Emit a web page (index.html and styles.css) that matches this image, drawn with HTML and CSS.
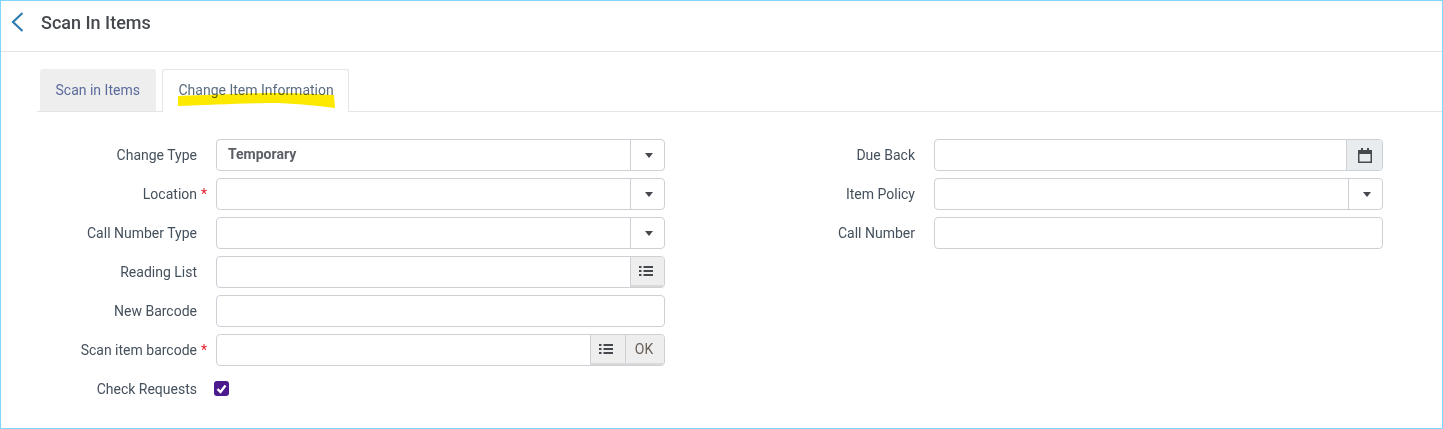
FILE: index.html
```html
<!DOCTYPE html>
<html lang="en">
<head>
<meta charset="utf-8">
<title>Scan In Items</title>
<link rel="stylesheet" href="styles.css">
</head>
<body>
<div class="frame">
  <header class="page-header">
    <svg class="back" width="14" height="20" viewBox="0 0 14 20"><path d="M12.500 1 3 10l9.500 9" fill="none" stroke="#2f7bb0" stroke-width="2.200"/></svg>
    <h1 class="title">Scan In Items</h1>
  </header>
  <nav class="tabs">
    <div class="tab tab-off">Scan in Items</div>
    <div class="tab tab-on">Change Item Information
      <svg class="marker" width="158" height="18" viewBox="0 0 158 18"><path d="M0 4 C30 3 50 2 90 1 C115 1 140 2 156 3 L157 16 C140 14 125 12 100 11 C70 11 30 13 0 14Z" fill="#fde800"/></svg>
    </div>
  </nav>
  <main class="form">
    <section class="col">
      <div class="row"><label class="lbl">Change Type</label>
        <div class="field"><span class="val">Temporary</span><span class="addon"><i class="caret"></i></span></div></div>
      <div class="row"><label class="lbl"><span class="req-wrap">Location<b class="req">*</b></span></label>
        <div class="field"><span class="val"></span><span class="addon"><i class="caret"></i></span></div></div>
      <div class="row"><label class="lbl">Call Number Type</label>
        <div class="field"><span class="val"></span><span class="addon"><i class="caret"></i></span></div></div>
      <div class="row"><label class="lbl">Reading List</label>
        <div class="field"><span class="val"></span><span class="addon grey"><svg class="list" width="14" height="10" viewBox="0 0 14 10"><path d="M0 0h2.500v2H0zM0 4h2.500v2H0zM0 8h2.500v2H0zM4.500 0H14v2H4.500zM4.500 4H14v2H4.500zM4.500 8H14v2H4.500z" fill="#45494e"/></svg></span></div></div>
      <div class="row"><label class="lbl">New Barcode</label>
        <div class="field"><span class="val"></span></div></div>
      <div class="row"><label class="lbl"><span class="req-wrap">Scan item barcode<b class="req">*</b></span></label>
        <div class="field"><span class="val"></span><span class="addon grey narrow"><svg class="list" width="14" height="10" viewBox="0 0 14 10"><path d="M0 0h2.500v2H0zM0 4h2.500v2H0zM0 8h2.500v2H0zM4.500 0H14v2H4.500zM4.500 4H14v2H4.500zM4.500 8H14v2H4.500z" fill="#45494e"/></svg></span><span class="addon grey ok">OK</span></div></div>
      <div class="row"><label class="lbl">Check Requests</label>
        <span class="check"><svg width="15" height="15" viewBox="0 0 15 15"><path d="M3.500 8 6.500 11 11.500 4.500" fill="none" stroke="#fff" stroke-width="2.400"/></svg></span></div>
    </section>
    <section class="col">
      <div class="row"><label class="lbl">Due Back</label>
        <div class="field"><span class="val"></span><span class="addon cal"><svg width="14" height="15" viewBox="0 0 14 15"><path d="M3 0h2v2h4V0h2v2h3v13H0V2h3z" fill="#45494e"/><path d="M1.500 6h11v7.500h-11z" fill="#e9ecef"/></svg></span></div></div>
      <div class="row"><label class="lbl">Item Policy</label>
        <div class="field"><span class="val"></span><span class="addon"><i class="caret"></i></span></div></div>
      <div class="row"><label class="lbl">Call Number</label>
        <div class="field"><span class="val"></span></div></div>
    </section>
  </main>
</div>
</body>
</html>
```
FILE: styles.css
```css
html, body { margin: 0; padding: 0; }
body { font-family: Roboto, "Liberation Sans", sans-serif; font-size: 14px; color: #3d4a5c; background: #fff; }
.frame { box-sizing: border-box; width: 1443px; height: 429px; border: 1px solid #7fd6ff; overflow: hidden; }
.page-header { display: flex; align-items: flex-start; height: 50px; border-bottom: 1px solid #e3e5e8; padding-left: 9px; }
.back { margin: 11px 17px 0 0; }
.title { margin: 11px 0 0; font-size: 18px; line-height: 21px; font-weight: 500; color: #45494e; }
.tabs { display: flex; gap: 6px; height: 42px; margin: 17px 0 0 36px; padding-left: 3px; border-bottom: 1px solid #e3e5e8; }
.tab { box-sizing: border-box; height: 43px; padding: 0 15.500px; line-height: 42px; border-radius: 3px 3px 0 0; position: relative; white-space: nowrap; }
.tab-off { background: #eeeeee; color: #5b6a9c; height: 42px; width: 116px; }
.tab-on { background: #fff; border: 1px solid #e3e5e8; border-bottom: 0; width: 187px; color: #5a6b7e; line-height: 40px; }
.marker { position: absolute; left: 15px; top: 22px; mix-blend-mode: multiply; }
.form { display: flex; padding-top: 27px; }
.col { width: 718px; }
.row { display: flex; align-items: center; height: 32px; margin-bottom: 7px; }
.lbl { box-sizing: border-box; width: 215px; padding-right: 19px; text-align: right; color: #44505c; }
.req-wrap { position: relative; }
.req { position: absolute; left: 100%; top: 0; margin-left: 4px; color: #e0202c; font-weight: 400; }
.field { box-sizing: border-box; display: flex; width: 449px; height: 32px; border: 1px solid #cdd1d6; border-radius: 4px; overflow: hidden; }
.val { flex: 1; padding-left: 11px; line-height: 29px; font-weight: 700; color: #5a5f66; font-size: 14px; }
.addon { box-sizing: border-box; width: 34px; display: flex; align-items: center; justify-content: center; border-left: 1px solid #cdd1d6; }
.grey { background: #eeeeee; border-bottom: 2px solid #d9d9d9; }
.list { margin-right: 4px; }
.narrow { width: 35px; }
.ok { width: 39px; color: #6a5f55; padding-right: 2px; }
.cal { width: 36px; background: #e9ecef; }
.caret { width: 0; height: 0; margin-left: 2px; border-left: 4.500px solid transparent; border-right: 4.500px solid transparent; border-top: 5px solid #45494e; }
.check { display: flex; width: 15px; height: 15px; margin-left: -2px; margin-top: -2px; border-radius: 3px; background: #4b1a8c; }
```
